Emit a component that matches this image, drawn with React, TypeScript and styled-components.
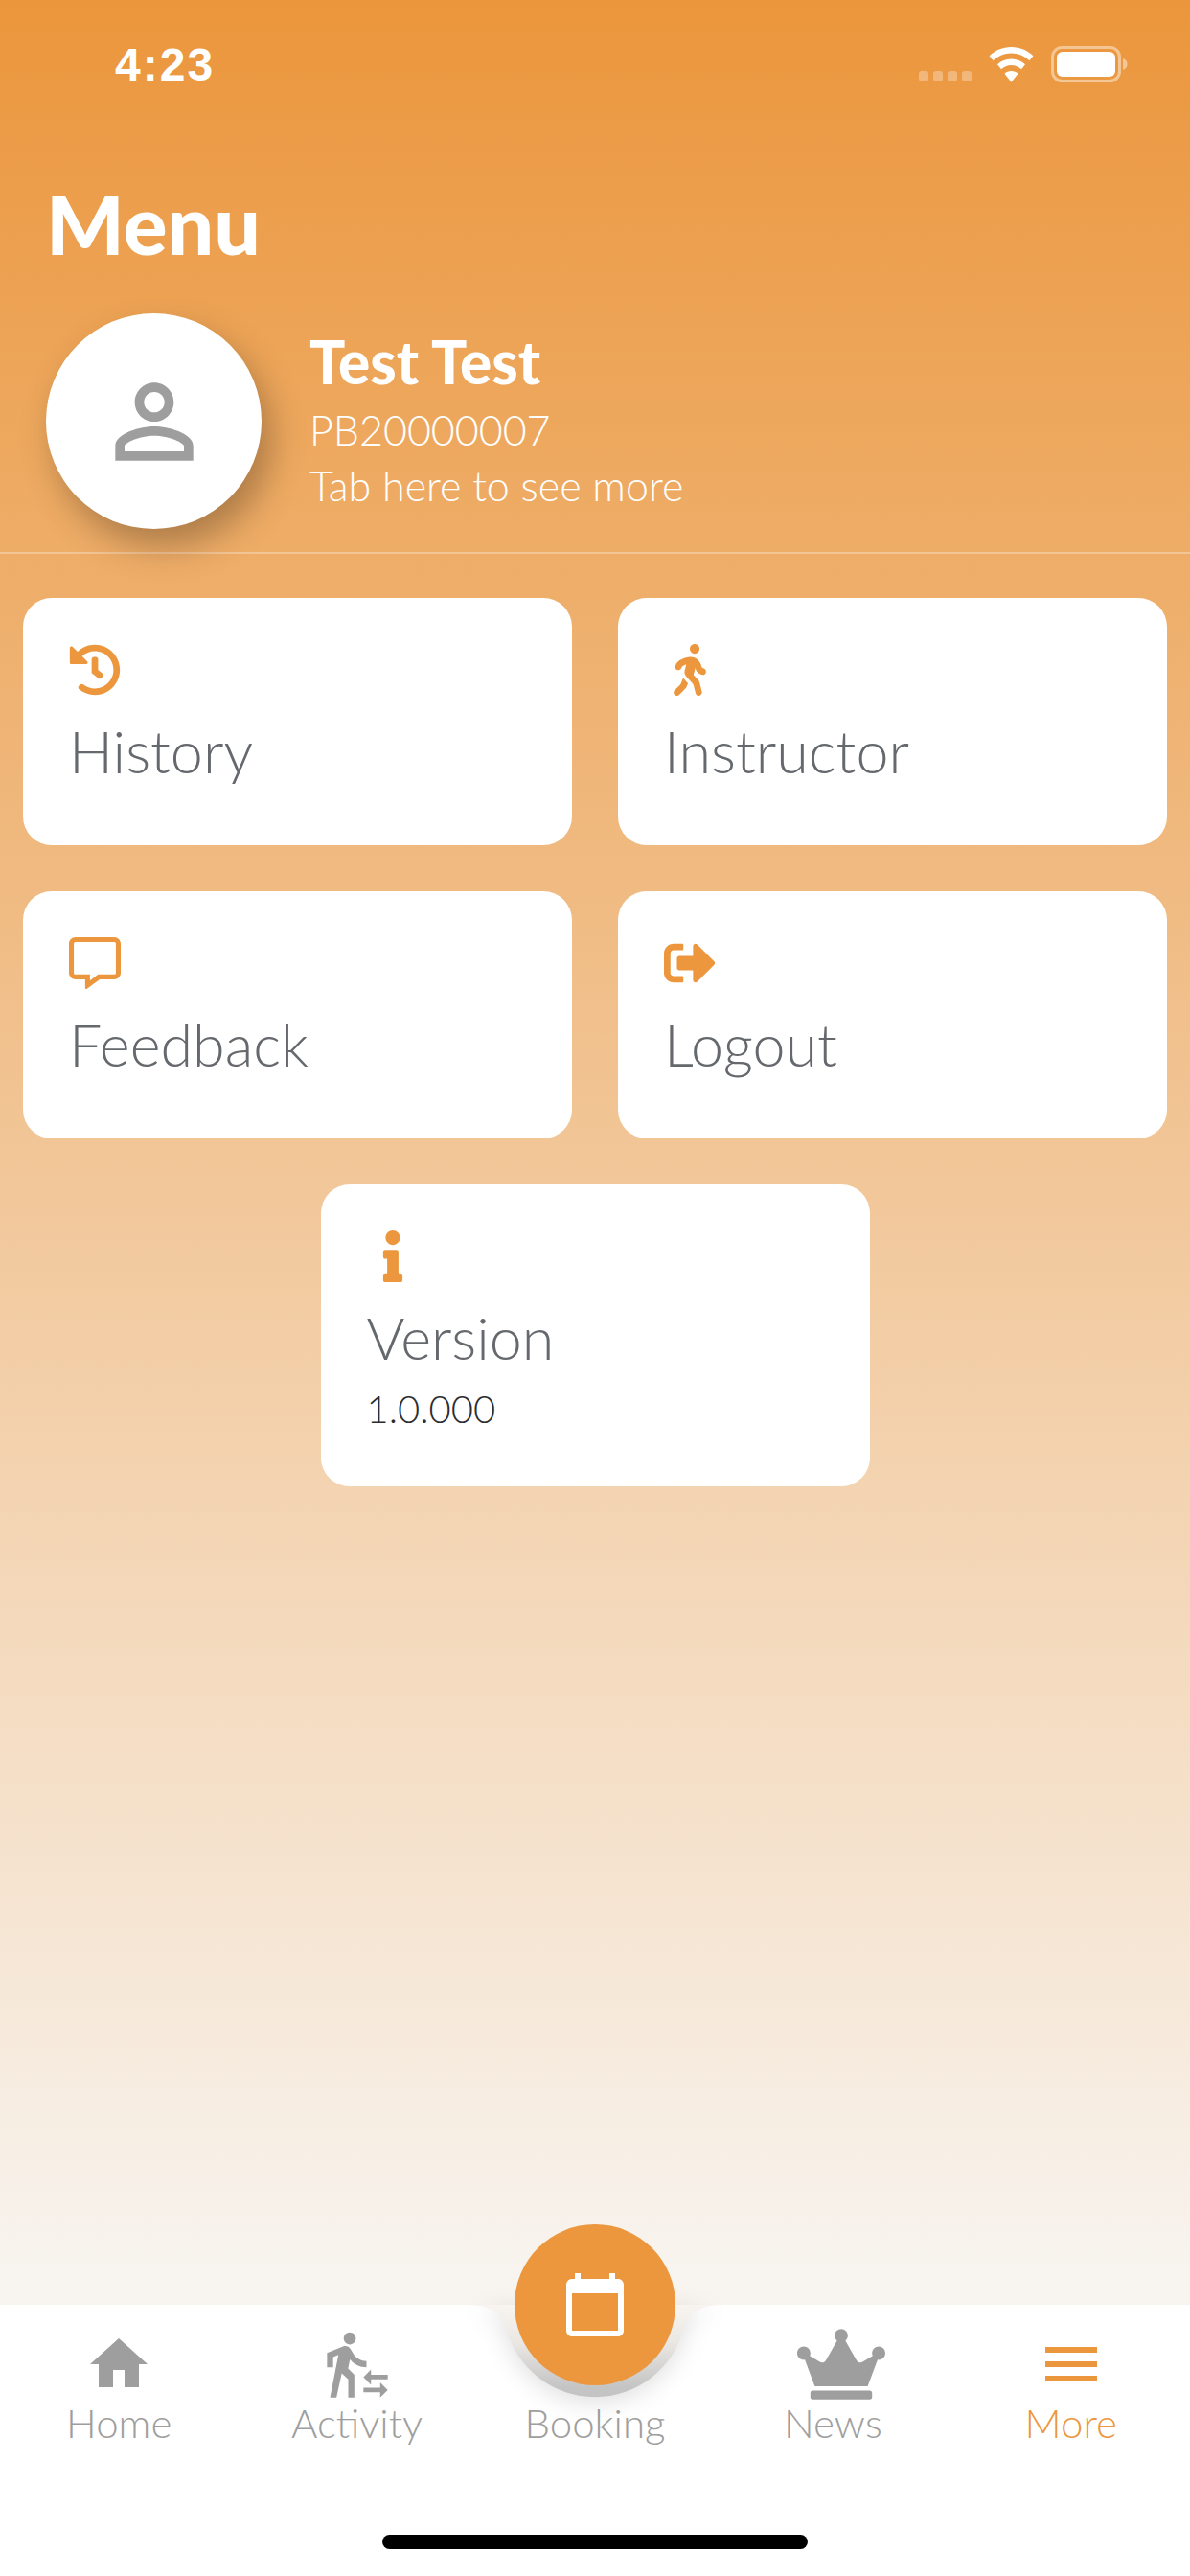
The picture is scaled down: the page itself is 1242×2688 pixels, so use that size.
import React from "react";
import styled, { createGlobalStyle } from "styled-components";
import { FaCrown, FaHistory, FaInfo, FaRegCommentAlt, FaSignOutAlt, FaWalking } from "react-icons/fa";
import { MdCalendarToday, MdHome, MdMenu, MdPersonOutline, MdTransferWithinAStation } from "react-icons/md";

const ORANGE = "#ec973e";
const GREY = "#9e9e9e";

const GlobalStyle = createGlobalStyle`
  html, body { margin: 0; padding: 0; }
  body { font-family: "Lato", "Noto Sans", sans-serif; }
`;

const Screen = styled.div`
  width: 1242px;
  height: 2688px;
  display: flex;
  flex-direction: column;
  overflow: hidden;
  background: linear-gradient(180deg, #eb963c 0, #f8f5f1 2400px);
`;

const StatusBar = styled.div`
  height: 185px;
  flex: none;
  display: flex;
  align-items: flex-start;
  justify-content: space-between;
  box-sizing: border-box;
  padding: 41px 65px 0 120px;
`;

const Clock = styled.span`
  font-family: "Liberation Sans", sans-serif;
  font-weight: 700;
  font-size: 48px;
  letter-spacing: 2px;
  line-height: 54px;
  color: #fff;
`;

const StatusIcons = styled.div`
  display: flex;
  align-items: center;
  gap: 18px;
  padding-top: 7px;
`;

const SignalDots = styled.div`
  display: flex;
  gap: 5px;
  margin-top: 24px;
`;

const SignalDot = styled.i`
  width: 10px;
  height: 11px;
  border-radius: 3px;
  background: rgba(255, 255, 255, 0.3);
`;

const PageTitle = styled.h1`
  margin: -2px 0 2px 48px;
  font-weight: 900;
  font-size: 86px;
  line-height: 100px;
  color: #fff;
`;

const ProfileRow = styled.div`
  display: flex;
  align-items: center;
  gap: 50px;
  margin-top: 42px;
  padding: 0 48px 24px;
  border-bottom: 2px solid rgba(255, 255, 255, 0.3);
`;

const Avatar = styled.div`
  width: 225px;
  height: 225px;
  flex: none;
  border-radius: 50%;
  background: #fff;
  color: ${GREY};
  display: flex;
  align-items: center;
  justify-content: center;
  box-shadow: 10px 18px 34px rgba(70, 50, 30, 0.38);
`;

const ProfileText = styled.div`
  display: flex;
  flex-direction: column;
  padding-bottom: 2px;
  color: #fff;
`;

const ProfileName = styled.div`
  font-weight: 900;
  font-size: 62px;
  line-height: 70px;
  margin-bottom: 8px;
`;

const ProfileLine = styled.div`
  font-weight: 300;
  font-size: 43px;
  line-height: 58px;
`;

const CardGrid = styled.div`
  display: grid;
  grid-template-columns: 573px 573px;
  justify-content: center;
  gap: 48px;
  margin-top: 46px;
`;

const Card = styled.div<{ $center?: boolean }>`
  ${(p) => p.$center && "grid-column: 1 / -1; justify-self: center; width: 573px; height: 315px;"}
  min-height: 258px;
  box-sizing: border-box;
  padding: 48px 48px 30px;
  background: #fff;
  border-radius: 30px;
`;

const CardIcon = styled.div`
  width: 54px;
  height: 54px;
  display: flex;
  align-items: center;
  justify-content: center;
  color: ${ORANGE};
`;

const CardTitle = styled.div`
  margin-top: 22px;
  font-weight: 300;
  font-size: 61px;
  line-height: 72px;
  color: #65686d;
`;

const CardSub = styled.div`
  margin-top: 10px;
  font-weight: 300;
  font-size: 40px;
  line-height: 56px;
  color: #2c2c2e;
`;

const NavBar = styled.nav`
  position: relative;
  margin-top: auto;
  flex: none;
  height: 283px;
  background: #fff;
  box-sizing: border-box;
`;

const NavRow = styled.div`
  display: grid;
  grid-template-columns: repeat(5, 1fr);
`;

const NavItem = styled.div<{ $active?: boolean }>`
  display: flex;
  flex-direction: column;
  align-items: center;
  color: ${(p) => (p.$active ? ORANGE : GREY)};
`;

const NavIcon = styled.div<{ $shift?: number }>`
  height: 72px;
  margin-top: 26px;
  margin-left: ${(p) => p.$shift ?? 0}px;
  display: flex;
  align-items: center;
  justify-content: center;
`;

const NavLabel = styled.span`
  font-weight: 300;
  font-size: 42px;
  line-height: 50px;
`;

const Notch = styled.svg`
  position: absolute;
  left: 476px;
  top: 0;
  filter: drop-shadow(0 6px 12px rgba(0, 0, 0, 0.12));
`;

const BookingButton = styled.div`
  position: absolute;
  left: 537px;
  top: -84px;
  width: 168px;
  height: 168px;
  border-radius: 50%;
  background: ${ORANGE};
  color: #fff;
  display: flex;
  align-items: center;
  justify-content: center;
`;

const HomeIndicator = styled.div`
  position: absolute;
  left: 399px;
  bottom: 28px;
  width: 444px;
  height: 15px;
  border-radius: 8px;
  background: #000;
`;

const menuCards = [
  { title: "History", icon: <FaHistory size={54} /> },
  { title: "Instructor", icon: <FaWalking size={54} /> },
  { title: "Feedback", icon: <FaRegCommentAlt size={54} /> },
  { title: "Logout", icon: <FaSignOutAlt size={54} /> },
];

const navItems = [
  { label: "Home", icon: <MdHome size={72} /> },
  { label: "Activity", icon: <MdTransferWithinAStation size={76} /> },
  { label: "Booking", icon: null },
  { label: "News", icon: <FaCrown size={92} />, shift: 18 },
  { label: "More", icon: <MdMenu size={72} />, active: true },
];

export default function App() {
  return (
    <Screen>
      <GlobalStyle />
      <StatusBar>
        <Clock>4:23</Clock>
        <StatusIcons>
          <SignalDots>
            <SignalDot />
            <SignalDot />
            <SignalDot />
            <SignalDot />
          </SignalDots>
          <svg width="47" height="37" viewBox="0 0 47 37">
            <path fill="#fff" d="M23.5 0C14.5 0 6.6 3.6.6 9.3l4 5C9.6 9.5 16.2 6.5 23.5 6.5s13.9 3 18.9 7.8l4-5C40.4 3.6 32.500 0 23.500 0z" />
            <path fill="#fff" d="M23.500 12.500c-5.600 0-10.700 2.200-14.500 5.800l4 5c2.700-2.600 6.400-4.300 10.500-4.300s7.800 1.700 10.500 4.300l4-5c-3.800-3.600-8.900-5.800-14.500-5.800z" />
            <path fill="#fff" d="M23.500 25c-2.800 0-5.200 1-7.100 2.800l7.100 9 7.100-9C28.700 26 26.300 25 23.500 25z" />
          </svg>
          <svg width="80" height="38" viewBox="0 0 80 38">
            <rect x="1.500" y="1.500" width="70" height="35" rx="10" fill="none" stroke="#fff" strokeOpacity="0.45" strokeWidth="3" />
            <rect x="6" y="6" width="61" height="26" rx="6" fill="#fff" />
            <path d="M75 13c3 1 4.500 3 4.500 6s-1.500 5-4.500 6z" fill="#fff" fillOpacity="0.45" />
          </svg>
        </StatusIcons>
      </StatusBar>

      <PageTitle>Menu</PageTitle>

      <ProfileRow>
        <Avatar>
          <MdPersonOutline size={122} />
        </Avatar>
        <ProfileText>
          <ProfileName>Test Test</ProfileName>
          <ProfileLine>PB20000007</ProfileLine>
          <ProfileLine>Tab here to see more</ProfileLine>
        </ProfileText>
      </ProfileRow>

      <CardGrid>
        {menuCards.map((card) => (
          <Card key={card.title}>
            <CardIcon>{card.icon}</CardIcon>
            <CardTitle>{card.title}</CardTitle>
          </Card>
        ))}
        <Card $center>
          <CardIcon>
            <FaInfo size={54} />
          </CardIcon>
          <CardTitle>Version</CardTitle>
          <CardSub>1.0.000</CardSub>
        </Card>
      </CardGrid>

      <NavBar>
        <Notch width="290" height="110" viewBox="0 0 290 110">
          <defs>
            <linearGradient id="notchFill" x1="0" y1="0" x2="0" y2="1">
              <stop offset="0" stopColor="#f8f5f1" />
              <stop offset="0.4" stopColor="#ebe8e4" />
              <stop offset="0.9" stopColor="#c4c4c4" />
            </linearGradient>
          </defs>
          <path
            fill="url(#notchFill)"
            d="M10 0C36 0 49 9 52 24A96 96 0 0 0 238 24C241 9 254 0 280 0Z"
          />
        </Notch>
        <BookingButton>
          <MdCalendarToday size={72} />
        </BookingButton>
        <NavRow>
          {navItems.map((item) => (
            <NavItem key={item.label} $active={item.active}>
              <NavIcon $shift={item.shift}>{item.icon}</NavIcon>
              <NavLabel>{item.label}</NavLabel>
            </NavItem>
          ))}
        </NavRow>
        <HomeIndicator />
      </NavBar>
    </Screen>
  );
}
